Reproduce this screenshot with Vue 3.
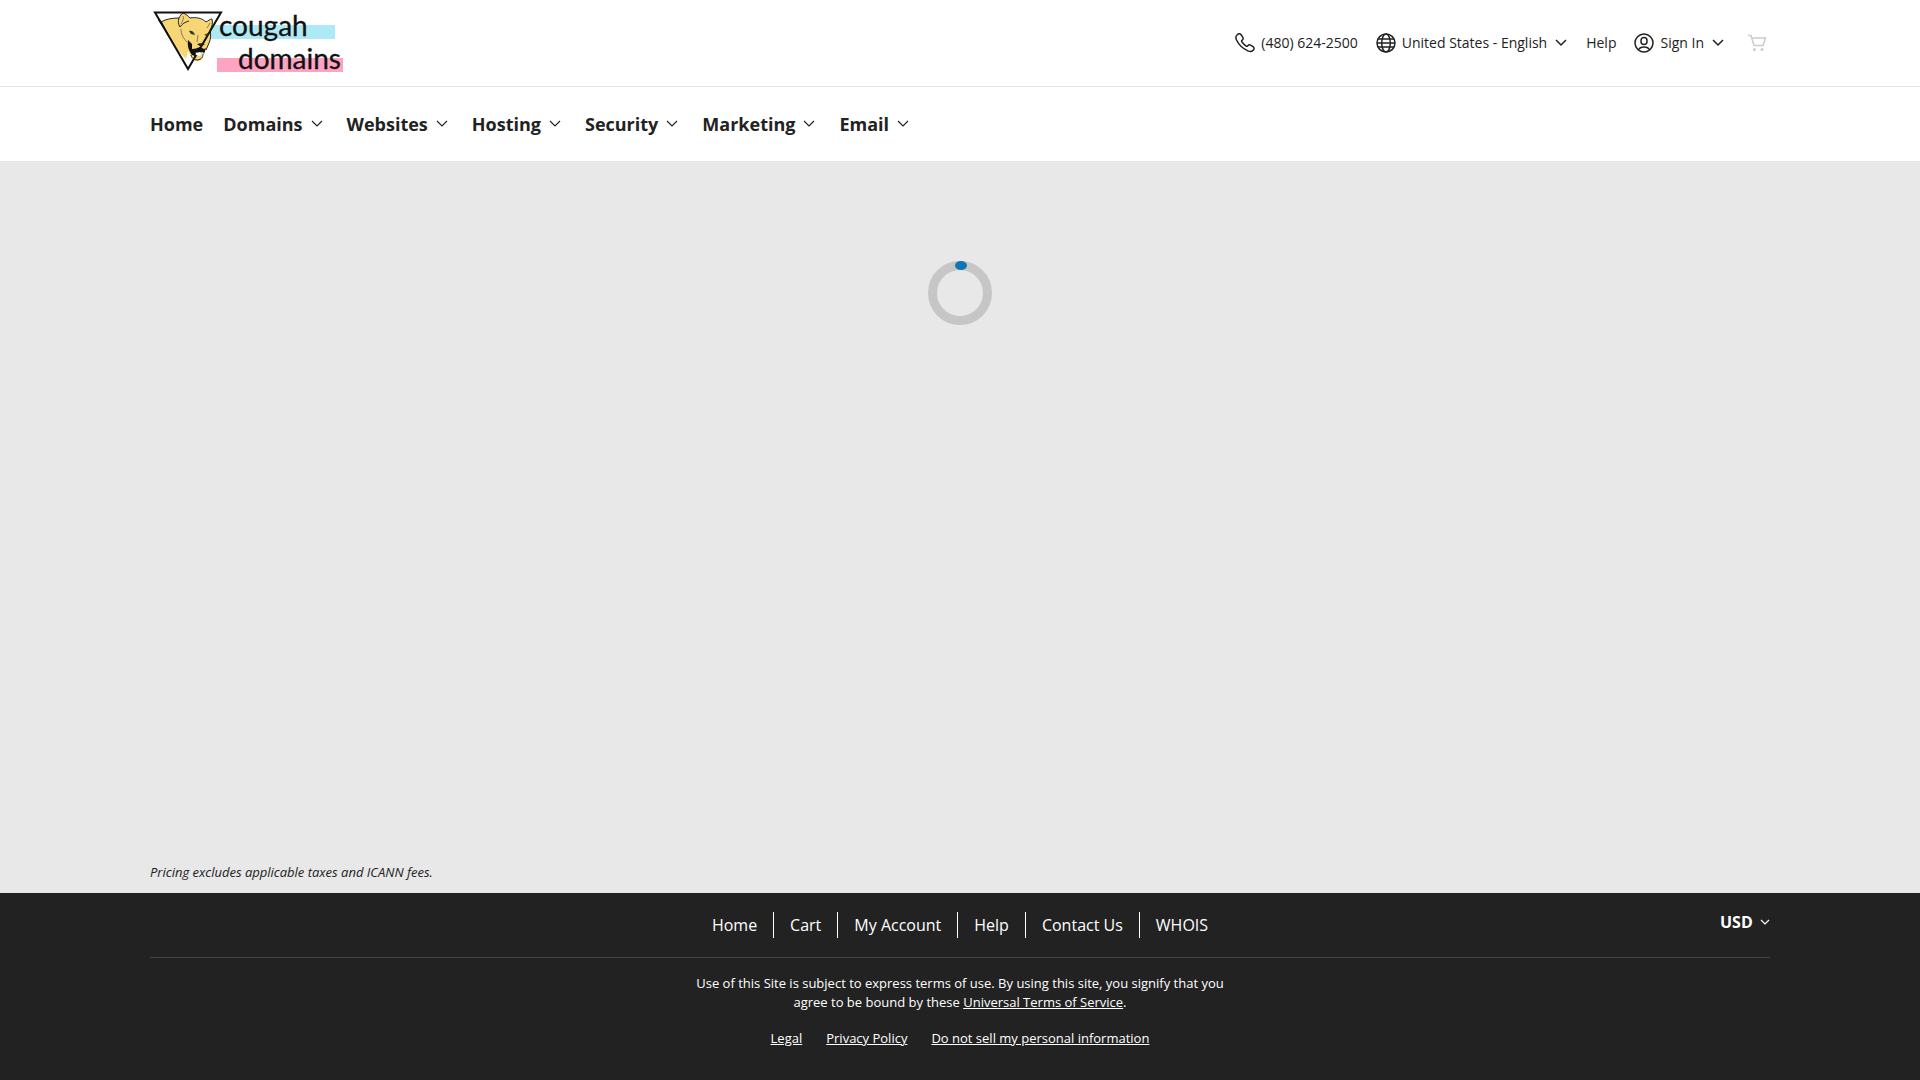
<template>
  <div class="page">
    <header>
      <div class="topbar">
        <div class="container topbar-row">
          <a class="logo" href="#" aria-label="cougah domains">
            <svg width="200" height="86" viewBox="0 0 200 86">
              <rect x="60" y="25" width="125" height="14" fill="#aeeaf5" />
              <rect x="67" y="58" width="126" height="14" fill="#ffa3c2" />
              <path d="M5 12.500h66L38 69z" fill="#fff" />
              <path d="M11 22c5-3 11-4 18-4 1-2 2-4 4-5 3 1 5 3 7 5 6-1 12 0 16 4 2-1 4-3 6-3 1 4 0 8-2 11 1 4 1 9-1 13l-3 7-4 4v5c-2 3-8 3-10-1l-4-7-2 8c-10-10-19-25-25-37z" fill="#f7d774" />
              <path d="M5 12.500h66L38 69z" fill="none" stroke="#111" stroke-width="2" />
              <path d="M11 22c5-3 11-4 18-4M56 22c2-1 4-3 6-3 1 4 0 8-2 11 1 4 1 9-1 13l-3 7M29 18c1-2 2-4 4-5 3 1 5 3 7 5 6-1 12 0 16 4M29 18c-1 3-1 6 1 9 2-3 5-5 9-6" fill="none" stroke="#222" stroke-width="1" />
              <path d="M33 16c1 2 0 5-2 8M31 29c0 5 2 9 6 13M60 23l-3 5M48 35l-1 7" fill="none" stroke="#555" stroke-width="0.700" />
              <path d="M9 19l3 3c2 4 5 9 8 16L8 20z" fill="#111" />
              <path d="M39 31c3-1 5 1 6 4l-4-1zM54 35l4-2 1 1-2 2z" fill="#333" />
              <path d="M47 44c2-1 6-1 8 0l-4 3z" fill="#222" />
              <path d="M38 40l4 4v5c3 0 5-1 8-2l4 2 2-1-2 6-1-2-3 1-4-1-1 4-3-1c-3-4-5-9-4-15z" fill="#111" />
              <path d="M46 53l4-1 2 1-2 3-4-1z" fill="#fff" />
              <path d="M41 55c1 4 4 5 7 5 3-1 5-2 5-6" fill="none" stroke="#222" stroke-width="1" />
              <text x="69" y="36">cougah</text>
              <text x="88" y="69">domains</text>
            </svg>
          </a>
          <div class="tools">
            <a class="tool phone" href="tel:4806242500">
              <svg width="20" height="20" viewBox="0 0 20 20">
                <path d="M2.500 1.500C4 .2 5.300.5 6.300 2l1.500 2.400c.7 1.100.3 2-.8 2.900-.7.600-.4 1.300.2 2 1.200 1.600 2.200 2.600 3.700 3.600.8.600 1.300.5 1.900-.2.800-1 1.700-1.200 2.800-.5l2.400 1.500c1.400 1 1.400 2.300.2 3.500-1.400 1.500-3.300 1.600-5.300.7-5.200-2.300-9-6-11.400-10.900-1-2.100-.7-4.200 1-5.500z" />
              </svg>
              (480) 624-2500
            </a>
            <button class="tool region" type="button">
              <svg width="20" height="20" viewBox="0 0 20 20">
                <circle cx="10" cy="10" r="9" />
                <ellipse cx="10" cy="10" rx="4.300" ry="9" />
                <path d="M2 6h16M1 10h18M2 14h16" />
              </svg>
              United States - English
              <svg class="chevron" width="12" height="8" viewBox="0 0 12 8"><path d="M1 1l5 5 5-5" /></svg>
            </button>
            <a class="tool help" href="#">Help</a>
            <button class="tool signin" type="button">
              <svg width="20" height="20" viewBox="0 0 20 20">
                <path d="M4 16.700a9 9 0 1 1 12 0M4.500 17c1.500-4 9.500-4 11 0-3 2.700-8 2.700-11 0z" />
                <rect x="7" y="4.500" width="6" height="7" rx="3" />
              </svg>
              Sign In
              <svg class="chevron" width="12" height="8" viewBox="0 0 12 8"><path d="M1 1l5 5 5-5" /></svg>
            </button>
            <a class="tool cart" href="#" aria-label="Cart">
              <svg width="20" height="18" viewBox="0 0 20 18">
                <path d="M1 1.500h3l3 10h9l2.500-7.500H5" />
                <circle class="wheel" cx="7.500" cy="15.500" r="1.500" />
                <circle class="wheel" cx="15" cy="15.500" r="1.500" />
              </svg>
            </a>
          </div>
        </div>
      </div>
      <nav class="main-nav">
        <ul class="container">
          <li v-for="item in menu" :key="item.label">
            <a v-if="!item.menu" href="#">{{ item.label }}</a>
            <button v-else type="button">
              {{ item.label }}
              <svg class="chevron" width="12" height="8" viewBox="0 0 12 8"><path d="M1 1l5 5 5-5" /></svg>
            </button>
          </li>
        </ul>
      </nav>
    </header>

    <main>
      <svg class="spinner" width="64" height="64" viewBox="0 0 64 64" role="img" aria-label="Loading">
        <circle cx="32" cy="32" r="27.500" fill="none" stroke="#c6c6c6" stroke-width="9" />
        <ellipse cx="33" cy="4.500" rx="6" ry="4.500" fill="#0f76b5" />
      </svg>
      <p class="container disclaimer">Pricing excludes applicable taxes and ICANN fees.</p>
    </main>

    <footer>
      <div class="container">
        <div class="footer-top">
          <ul class="footer-links">
            <li v-for="link in footerLinks" :key="link"><a href="#">{{ link }}</a></li>
          </ul>
          <div class="currency">
            <select v-model="currency" aria-label="Currency">
              <option>USD</option>
            </select>
            <svg class="chevron" width="10" height="6" viewBox="0 0 10 6"><path d="M1 1l4 4 4-4" /></svg>
          </div>
        </div>
        <p class="terms">
          <span>Use of this Site is subject to express terms of use. By using this site, you signify that you</span>
          <span>agree to be bound by these <a href="#">Universal Terms of Service</a>.</span>
        </p>
        <ul class="legal">
          <li v-for="link in legalLinks" :key="link"><a href="#">{{ link }}</a></li>
        </ul>
      </div>
    </footer>
  </div>
</template>

<script setup>
import { ref } from "vue"

const currency = ref("USD")

const menu = [
  { label: "Home" },
  { label: "Domains", menu: true },
  { label: "Websites", menu: true },
  { label: "Hosting", menu: true },
  { label: "Security", menu: true },
  { label: "Marketing", menu: true },
  { label: "Email", menu: true },
]

const footerLinks = ["Home", "Cart", "My Account", "Help", "Contact Us", "WHOIS"]
const legalLinks = ["Legal", "Privacy Policy", "Do not sell my personal information"]
</script>

<style>
body {
  margin: 0;
}
</style>

<style scoped>
.page {
  display: flex;
  flex-direction: column;
  min-height: 100vh;
  background: #e8e8e8;
  color: #222;
  font-family: "Open Sans", sans-serif;
  font-size: 14px;
}

.container {
  box-sizing: border-box;
  width: 100%;
  max-width: 1652px;
  margin: 0 auto;
  padding: 0 16px;
}

a,
button {
  color: inherit;
  font: inherit;
  text-decoration: none;
}

button {
  padding: 0;
  border: 0;
  background: none;
  cursor: pointer;
}

ul {
  margin: 0;
  padding: 0;
  list-style: none;
}

header {
  background: #fff;
}

.topbar {
  border-bottom: 1px solid #e8e8e8;
}

.topbar-row,
.tools,
.tool {
  display: flex;
  align-items: center;
}

.topbar-row {
  justify-content: space-between;
}

.logo svg {
  display: block;
}

.logo text {
  fill: #111;
  stroke: #111;
  stroke-width: 0.3;
  font-family: Lato, sans-serif;
  font-size: 28px;
}

.tools {
  gap: 18px;
  padding-right: 3px;
}

.tool {
  gap: 6px;
  line-height: 20px;
}

.tool svg,
.chevron {
  fill: none;
  stroke: currentColor;
  stroke-width: 1.5;
}

.tool .chevron {
  margin: 0 1px 0 2px;
}

.cart {
  margin-left: 4px;
  color: #ccc;
}

.cart .wheel {
  fill: currentColor;
  stroke: none;
}

.main-nav ul {
  display: flex;
  gap: 20px;
  padding-top: 24px;
  padding-bottom: 24px;
  font-size: 18px;
  font-weight: 700;
  line-height: 26px;
}

.main-nav button {
  display: flex;
  align-items: center;
  gap: 8px;
}

.main-nav .chevron {
  margin-right: 4px;
  stroke-width: 1.2;
}

main {
  display: flex;
  flex: 1;
  flex-direction: column;
  align-items: center;
  justify-content: space-between;
}

.spinner {
  margin-top: 100px;
}

.disclaimer {
  padding-bottom: 12px;
  font-size: 13px;
  font-style: italic;
  line-height: 18px;
}

footer {
  padding: 19px 0 32px;
  background: #222;
  color: #fff;
}

.footer-top {
  display: grid;
  grid-template-columns: 1fr auto 1fr;
  align-items: start;
  padding-bottom: 19px;
  border-bottom: 1px solid #444;
}

.footer-links {
  display: flex;
  grid-column: 2;
  font-size: 16px;
  line-height: 26px;
}

.footer-links li {
  padding: 0 16px;
}

.footer-links li + li {
  border-left: 1px solid #fff;
}

.currency {
  display: flex;
  align-items: center;
  justify-self: end;
  gap: 7px;
}

.currency .chevron {
  stroke-width: 1.2;
}

.currency select {
  padding: 0;
  border: 0;
  appearance: none;
  background: #222;
  color: #fff;
  font: 700 16px/20px "Open Sans", sans-serif;
}

.terms {
  margin: 16px 0;
  font-size: 13px;
  line-height: 19px;
  text-align: center;
}

.terms span {
  display: block;
}

.terms a,
.legal a {
  text-decoration: underline;
}

.legal {
  display: flex;
  justify-content: center;
  gap: 24px;
  font-size: 13px;
  line-height: 20px;
}
</style>
